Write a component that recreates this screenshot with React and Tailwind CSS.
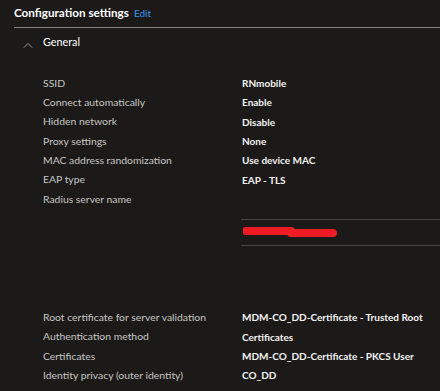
export default function App() {
  const rows1 = [
    ["SSID", "RNmobile"],
    ["Connect automatically", "Enable"],
    ["Hidden network", "Disable"],
    ["Proxy settings", "None"],
    ["MAC address randomization", "Use device MAC"],
    ["EAP type", "EAP - TLS"],
    ["Radius server name", ""],
  ];
  const rows2 = [
    ["Root certificate for server validation", "MDM-CO_DD-Certificate - Trusted Root"],
    ["Authentication method", "Certificates"],
    ["Certificates", "MDM-CO_DD-Certificate - PKCS User"],
    ["Identity privacy (outer identity)", "CO_DD"],
  ];
  const Row = ({ l, v }) => (
    <div className="flex h-[19.3px] items-center">
      <div className="w-[242px] pl-[43px] text-[10.4px] text-[#c8c6c4] shrink-0 whitespace-nowrap">{l}</div>
      <div className="text-[10px] text-[#f3f2f1] font-bold whitespace-nowrap">{v}</div>
    </div>
  );
  return (
    <div
      className="w-[440px] h-[391px] overflow-hidden bg-[#1b1a19] text-[11px]"
      style={{ fontFamily: 'Lato, "Noto Sans", sans-serif' }}
    >
      <div className="ml-[14px] h-[28px] border-b border-[#8a8886] flex items-center pb-[1px]">
        <span className="text-[11.7px] font-bold text-white">Configuration settings</span>
        <span className="ml-[5px] text-[10px] text-[#3a96f0]">Edit</span>
      </div>
      <div className="h-[30px] flex items-center">
        <svg width="10" height="6" viewBox="0 0 10 6" className="ml-[23px] mt-[3px]">
          <path d="M1 5.5 L5 1.5 L9 5.5" stroke="#a19f9d" strokeWidth="1" fill="none" />
        </svg>
        <span className="ml-[10px] text-[10.8px] text-white mb-[1px]">General</span>
      </div>
      <div className="mt-[16px]">
        {rows1.map(([l, v]) => (
          <Row key={l} l={l} v={v} />
        ))}
      </div>
      <div className="ml-[241px] mt-[10px] h-[27px] border-y border-[#484644] flex items-center">
        <svg width="100" height="12" viewBox="0 0 100 12" className="ml-[2px] mt-[1px]">
          <path d="M3 4 L48 4 M48 6 L90 6" stroke="#ed1c24" strokeWidth="8" strokeLinecap="round" fill="none" />
        </svg>
      </div>
      <div className="mt-[62px]">
        {rows2.map(([l, v]) => (
          <Row key={l} l={l} v={v} />
        ))}
      </div>
    </div>
  );
}
